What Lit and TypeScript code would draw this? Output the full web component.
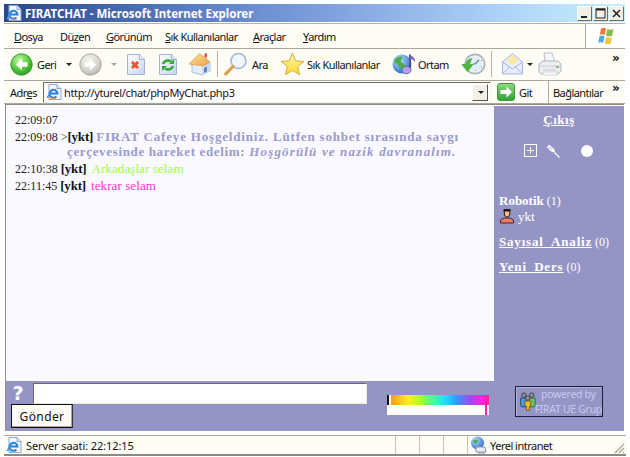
import { LitElement, html, css, svg } from "lit";
import { customElement } from "lit/decorators.js";

const defs = svg`
  <defs>
    <radialGradient id="gGreen" cx=".4" cy=".3" r=".8"><stop offset="0" stop-color="#c8f5a0"/><stop offset=".55" stop-color="#52c83c"/><stop offset="1" stop-color="#1f8f22"/></radialGradient>
    <radialGradient id="gGrey" cx=".4" cy=".3" r=".8"><stop offset="0" stop-color="#f4f4ee"/><stop offset=".6" stop-color="#d6d6cc"/><stop offset="1" stop-color="#a9a99f"/></radialGradient>
    <linearGradient id="gPage" x1="0" y1="0" x2="1" y2="1"><stop offset="0" stop-color="#ffffff"/><stop offset="1" stop-color="#c4d4f2"/></linearGradient>
    <linearGradient id="gStar" x1="0" y1="0" x2="0" y2="1"><stop offset="0" stop-color="#fffbb0"/><stop offset="1" stop-color="#fbd62c"/></linearGradient>
    <linearGradient id="gRoof" x1="0" y1="0" x2="1" y2="1"><stop offset="0" stop-color="#fde6a0"/><stop offset="1" stop-color="#eaa040"/></linearGradient>
    <radialGradient id="gGlobe" cx=".35" cy=".3" r=".8"><stop offset="0" stop-color="#b9e2fb"/><stop offset="1" stop-color="#1f63c6"/></radialGradient>
    <linearGradient id="gGo" x1="0" y1="0" x2="0" y2="1"><stop offset="0" stop-color="#8fdc7c"/><stop offset="1" stop-color="#2f9f35"/></linearGradient>
  </defs>`;

const ic = (w: number, h: number, body: unknown) =>
  html`<svg class="ic" width=${w} height=${h} viewBox="0 0 ${w} ${h}">${body}</svg>`;

const ieLogo = (s: number) => html`<svg class="ic" width=${s} height=${s} viewBox="0 0 16 16">
  <path d="M3 .5h8l4 4v11H3z" fill="#f4f7fd" stroke="#8ea6d0"/>
  <path d="M11 .5v4h4" fill="#dfe8f8" stroke="#8ea6d0"/>
  <path d="M4 9.500h7.500A4 4 0 1 0 10.500 12.500" fill="none" stroke="#2a7fd8" stroke-width="2"/>
  <path d="M.5 14C2 9 8 3.500 13 4.500 9 4 4 8 2.500 14z" fill="#3f9ae8"/>
  <path d="M4 14c2 1 5 1 7-.5" stroke="#e8a23a" stroke-width=".9" fill="none"/>
</svg>`;

const icons = {
  back: ic(23, 23, svg`<circle cx="11.5" cy="11.5" r="10.7" fill="url(#gGreen)" stroke="#3aa032"/>
    <path d="M12 5.500 6 11.500l6 6v-3.700h5.500V9.200H12z" fill="#fff"/>`),
  fwd: ic(23, 23, svg`<circle cx="11.5" cy="11.5" r="10.7" fill="url(#gGrey)" stroke="#aaaaa2"/>
    <path d="M11 5.500l6 6-6 6v-3.700H5.500V9.200H11z" fill="#fff"/>`),
  stop: ic(20, 23, svg`<path d="M1.500 1.500h12l5 5v15h-17z" fill="url(#gPage)" stroke="#9db3dc"/>
    <path d="M13.500 1.500v5h5" fill="#e6edfa" stroke="#9db3dc"/>
    <path d="M6 9l6 6M12 9l-6 6" stroke="#e8552a" stroke-width="3"/>`),
  refresh: ic(20, 23, svg`<path d="M1.500 1.500h12l5 5v15h-17z" fill="url(#gPage)" stroke="#9db3dc"/>
    <path d="M13.500 1.500v5h5" fill="#e6edfa" stroke="#9db3dc"/>
    <path d="M5 11a5 4.500 0 0 1 8-2.500" fill="none" stroke="#31a83a" stroke-width="2.400"/>
    <path d="M11 11h5V6z" fill="#31a83a"/>
    <path d="M15 13a5 4.500 0 0 1-8 2.500" fill="none" stroke="#31a83a" stroke-width="2.400"/>
    <path d="M9 13H4v5z" fill="#31a83a"/>`),
  home: ic(24, 24, svg`<path d="M4 12v8l10 3 8-4v-9L14 4z" fill="#e4eefb" stroke="#a8bcd6"/>
    <path d="M14 23v-9l8-4v9z" fill="#c9dcf3"/>
    <path d="M1 12 11.500 1.500 22 10l-7 4z" fill="url(#gRoof)" stroke="#d99a48" stroke-width=".7"/>
    <rect x="16.500" y="1.500" width="2.500" height="4" fill="#d8503a"/>
    <path d="M16 21v-5l3-1.500v5z" fill="#5c86bf"/>`),
  search: ic(24, 24, svg`<circle cx="14.500" cy="9" r="7.500" fill="#f2f7fd" stroke="#9fb7d8" stroke-width="1.600"/>
    <path d="M11 4.500a5 5 0 0 1 6-.5" stroke="#fff" fill="none"/>
    <path d="M9 14.500 1.800 21.800" stroke="#d9a04c" stroke-width="3.200" stroke-linecap="round"/>`),
  star: ic(25, 24, svg`<path d="M12.500 1l3.200 7.800 8.300.6-6.400 5.300 2 8.100-7.100-4.400-7.100 4.400 2-8.100L1 9.400l8.300-.6z" fill="url(#gStar)" stroke="#d9ae3a"/>`),
  media: ic(25, 24, svg`<circle cx="10" cy="12" r="9.500" fill="url(#gGlobe)"/>
    <path d="M3 7c3-2 5-3 7-2 1 2-2 3-1 5s4 1 4 4-3 3-5 2-1-3-3-4-3-2-2-5z" fill="#4fae4a"/>
    <path d="M18 2.500V17" stroke="#5b4aa0" stroke-width="2"/>
    <path d="M18 2.500c2 2 6 3 5 8-1-3-3-3-5-3.500z" fill="#7a68b8"/>
    <ellipse cx="14.500" cy="18" rx="4.500" ry="3.800" fill="#b3a4e0" stroke="#5b4aa0" stroke-width=".8"/>`),
  history: ic(25, 24, svg`<circle cx="14" cy="12" r="9.700" fill="#eef4f8" stroke="#a9b6bf" stroke-width="1.800"/>
    <circle cx="14" cy="12" r="7" fill="#dceef6"/>
    <path d="M14 12l4-4M14 12h-2" stroke="#6b7d8c" stroke-width="1.200"/>
    <path d="M20 8.500h1M20 15h1M15 18v1" stroke="#e06a4a"/>
    <path d="M1 12.500h4c0-3 2-5 5.500-6L9 11c-1 1-1 1.500-.5 1.500H12l-5.500 7z" fill="#52b93f" stroke="#34912c" stroke-width=".6"/>`),
  mail: ic(23, 24, svg`<path d="M1.500 10 11.500 1.500 21.500 10v12h-20z" fill="#e9eefc" stroke="#a8b4e6"/>
    <path d="M5 8l6.500-5 6.500 5-6.500 5z" fill="#fbe9a8"/>
    <path d="M1.500 10l10 7 10-7M1.500 22l7.500-8M21.500 22l-7.500-8" fill="none" stroke="#a8b4e6"/>`),
  printer: ic(24, 24, svg`<path d="M6 1h8l3 9H7z" fill="#f3f6fc" stroke="#b6c2d8"/>
    <path d="M1 12l4-3h15l3 3v7l-3 3H3l-2-2z" fill="#eceef0" stroke="#b0b6ba"/>
    <path d="M1 14h22M5 18h13" stroke="#c8ccd0"/><path d="M18 15h3" stroke="#5cb85a" stroke-width="1.500"/>
    <path d="M5 20h14v3H5z" fill="#fbfbfb" stroke="#c0c4c8" stroke-width=".6"/>`),
  go: ic(18, 18, svg`<rect x=".5" y=".5" width="17" height="17" rx="2.500" fill="url(#gGo)" stroke="#3d9a3f"/>
    <path d="M9.500 3.500 15 9l-5.500 5.500V11H3.500V7h6z" fill="#fff"/>`),
  win: ic(20, 18, svg`<path d="M5 1.500c2-1 3.500-1 5 0l-1.200 6.500c-1.500-1-3.200-1-5 0z" fill="#ec7a3a"/>
    <path d="M11.200 2c2 1 4 1 6.300 0l-1.300 6.800c-2.200 1-4 1-6.200 0z" fill="#7fbf4a"/>
    <path d="M3.500 9.300c1.800-1 3.500-1 5 0L7.200 16c-1.500-1-3.200-1-5 0z" fill="#52a6e8"/>
    <path d="M10 10c2.100 1 4 1 6 0l-1.300 6.500c-2 1-3.800 1-6 0z" fill="#f5c63a"/>`),
  net: ic(17, 18, svg`<circle cx="7.500" cy="7" r="6.500" fill="url(#gGlobe)"/><path d="M3 5c2-2 5-2 5 0s-3 3-4 2z" fill="#4fae4a"/>
    <path d="M6 11h9l1 5H6z" fill="#e8ecf4" stroke="#8a94b0"/><path d="M8 17h7" stroke="#8a94b0"/>`),
  user: ic(16, 16, svg`<path d="M1.500 15v-3l3.500-2h6l3.500 2v3z" fill="#f07a6a" stroke="#3a2a2a"/>
    <path d="M5 1.500h6v2l-.5 3.500-1.500 2H7L5.500 7z" fill="#f8c090" stroke="#201818"/>
    <path d="M4.800 1h6.400v2.500H4.800z" fill="#201818"/>`),
  group: html`<svg class="ic" width="16" height="19" viewBox="0 0 16 19">
    <circle cx="4" cy="3" r="2.300" fill="#8a94a8" stroke="#333" stroke-width=".8"/><circle cx="12" cy="3" r="2.300" fill="#8a94a8" stroke="#333" stroke-width=".8"/>
    <path d="M.5 6h6v7l-1 2h-4l-1-2z" fill="#3f9de0" stroke="#2a3a5a" stroke-width=".8"/>
    <path d="M9.500 6h6v7l-1 2h-4l-1-2z" fill="#5fc860" stroke="#2a5a3a" stroke-width=".8"/>
    <circle cx="8" cy="6" r="2.200" fill="#a89a7a" stroke="#333" stroke-width=".8"/>
    <path d="M5 9h6v4.500l-1.500 1v4h-3v-4L5 13.500z" fill="#f6b52e" stroke="#6a4a10" stroke-width=".8"/>
  </svg>`,
  pin: ic(14, 14, svg`<path d="M.8 3 3.200.8 7.800 4.300 9.300 8.800 4.800 7.300z" fill="#fff"/>
    <path d="M3 3.200l2.500 2.500M5.200 2.600l2 2" stroke="#9595c5" stroke-width=".9"/>
    <path d="M8.500 8.500l5 5" stroke="#fff" stroke-width="1.200"/>`),
};

const chev = html`<span class="chev">»</span>`;
const arrow = html`<span class="caret"></span>`;

@customElement("app-root")
export class AppRoot extends LitElement {
  static styles = css`
    :host { display: block; width: 630px; height: 457px; overflow: hidden; background: #fff; font-family: "Noto Sans", "DejaVu Sans", sans-serif; font-size: 11px; letter-spacing: -.55px; color: #111; }
    .defs { position: absolute; width: 0; height: 0; }
    .ic { display: block; }
    .win { height: 457px; display: flex; flex-direction: column; padding: 4px 5px 1px 4px; box-sizing: border-box; background: #fff; }
    .title { flex: 0 0 18px; display: flex; align-items: center; padding: 0 1px 0 2px; background: linear-gradient(90deg, #2a4789 0%, #5a7cc4 30%, #85a5e0 55%, #aed2f8 80%, #c9f1fb 100%); color: #fff; font: bold 11.500px "Noto Sans", "DejaVu Sans", sans-serif; letter-spacing: 0; }
    .title .t { margin-left: 3px; flex: 1; white-space: nowrap; }
    .wb { width: 15px; height: 15px; margin-left: 1px; box-sizing: border-box; background: #f1efe6; border: 1px solid; border-color: #fff #6f6c5e #6f6c5e #fff; display: flex; align-items: center; justify-content: center; }
    .bar { background: #fdfcf5; border-top: 1px solid #aca899; box-sizing: border-box; }
    .menu { flex: 0 0 25px; margin-top: 1px; display: flex; border-top: 1px solid #b5b2a5; }
    .menu-items { flex: 1; display: grid; grid-template-columns: 46px 46px 59px 88px 50px 1fr; padding-left: 10px; align-items: center; border-right: 1px solid #aca899; white-space: nowrap; }
    .logo { flex: 0 0 39px; display: flex; align-items: center; justify-content: center; background: #fff; }
    .tools { flex: 0 0 32px; display: grid; grid-template-columns: 27px 28px 14px 31px 16px 32px 30px 29px 7px 28px 28px 27px 85px 26px 43px 30px 10px 25px 12px 74px 1fr; padding: 0 0 1px 6px; align-items: center; white-space: nowrap; }
    .sep { width: 1px; height: 26px; background: #b5b2a5; }
    .caret { display: block; width: 0; height: 0; border: 3px solid transparent; border-top: 3px solid #222; border-bottom: 0; margin-left: 1px; }
    .caret.off { border-top-color: #aaa; }
    .chev { font: bold 12px "DejaVu Sans", sans-serif; line-height: 10px; align-self: start; margin-top: 4px; }
    .addr { flex: 0 0 24px; display: flex; align-items: center; padding-left: 6px; white-space: nowrap; border-bottom: 1px solid #aca899; }
    .addr .lbl { width: 33px; }
    .field { width: 448px; height: 21px; box-sizing: border-box; background: #fff; border: 1px solid; border-color: #6b6a60 #f2f1ea #f2f1ea #6b6a60; display: flex; align-items: center; padding-left: 2px; gap: 2px; }
    .field .url { flex: 1; letter-spacing: -.35px; }
    .dd { width: 16px; height: 17px; box-sizing: border-box; margin-right: 2px; background: #f1efe6; border: 1px solid; border-color: #fff #555 #555 #fff; display: flex; align-items: center; justify-content: center; }
    .gobtn { margin-left: 6px; width: 51px; display: flex; gap: 4px; align-items: center; border-right: 1px solid #aca899; height: 22px; }
    .links { margin-left: 4px; width: 59px; }
    .addr .chev { margin-top: 2px; }
    .page { flex: 1; min-height: 0; display: flex; flex-direction: column; margin: 0 1px; border-left: 1px solid #8c8c84; border-top: 1px solid #8c8c84; padding-top: 1px; letter-spacing: 0; }
    .top { flex: 1; min-height: 0; display: flex; }
    .chat { width: 488px; background: #f9f9ff; padding: 7px 0 0 9px; box-sizing: border-box; font: 12px/15px "Liberation Serif", serif; color: #222; }
    .row { padding-left: 52px; text-indent: -52px; margin-bottom: 2px; width: 440px; }
    .row b { font-size: 13px; line-height: 13px; letter-spacing: -.2px; color: #111; }
    .welcome { color: #9999cc; font-weight: bold; font-size: 13px; line-height: 13px; letter-spacing: .82px; }
    .welcome .l2 { letter-spacing: .65px; }
    .welcome i { letter-spacing: 1.15px; }
    .green, .pink { font-size: 13px; line-height: 13px; letter-spacing: .1px; margin-left: 2px; }
    .green { color: #99ff44; }
    .pink { color: #ff33cc; }
    .side { flex: 1; background: #9595c5; color: #fff; font: 12px/15px "Liberation Serif", serif; padding: 6px 0 0 5px; }
    .exit { display: block; text-align: center; font-weight: bold; font-size: 13px; letter-spacing: .5px; text-decoration: underline; padding-right: 5px; color: #fff; }
    .acts { display: grid; grid-template-columns: 22px 35px 12px; margin: 16px 0 0 25px; align-items: center; height: 15px; }
    .plus { width: 13px; height: 13px; }
    .dot { width: 12px; height: 12px; border-radius: 50%; background: #fff; }
    .roomname { font-weight: bold; font-size: 13px; }
    .room { margin-top: 10px; height: 15px; white-space: nowrap; }
    .room.first { margin-top: 35px; }
    .who { display: flex; align-items: center; gap: 3px; height: 16px; font-size: 13px; margin-bottom: 1px; }
    .room a { color: #fff; font-weight: bold; font-size: 13px; letter-spacing: .82px; text-decoration: underline; line-height: 15px; }
    .form { flex: 0 0 50px; background: #9595c5; display: grid; grid-template-columns: 27px 334px 20px 102px 26px 88px; grid-template-rows: 21px 1fr; padding: 2px 0 0 0; box-sizing: border-box; }
    .q { color: #fff; font: bold 19px/21px "DejaVu Sans", sans-serif; text-align: center; padding-right: 3px; }
    .input { background: #fff; border: 1px solid; border-color: #6b6a60 #ece9d8 #ece9d8 #6b6a60; box-sizing: border-box; }
    .send { grid-column: 1 / 3; margin: 0 0 0 5px; width: 62px; height: 24px; padding: 0; box-sizing: border-box; background: #fdfcf5; border: 1px solid #111; border-right-color: #333; box-shadow: inset -1px -1px 0 #aca899; font: 12px "Noto Sans", sans-serif; letter-spacing: .4px; color: #111; }
    .colors { grid-column: 4; grid-row: 1 / 3; display: flex; flex-direction: column; margin-top: 12px; }
    .cbar { height: 10px; display: flex; background: #fff; }
    .cbar .k { width: 2px; background: #111; }
    .cbar .w { width: 2px; background: #fff; }
    .cbar .g { flex: 1; background: linear-gradient(90deg, #ff9a22 0%, #ffee22 17%, #aaff22 30%, #33ffaa 45%, #22ddff 55%, #3399ff 67%, #aa44ee 82%, #ff22dd 93%, #ff2299 100%); }
    .cpick { height: 10px; background: #fff; display: flex; justify-content: flex-end; padding-right: 2px; }
    .cpick span { width: 2px; background: #ff22aa; }
    .pow { grid-column: 6; grid-row: 1 / 3; height: 31px; margin-top: 3px; box-sizing: border-box; border: 1px solid #1c1c3c; box-shadow: inset 1px 1px 0 #b0b0dc; display: flex; align-items: center; padding-left: 4px; color: #c8c8f0; font: 10.500px/15px "Noto Sans", sans-serif; letter-spacing: -.3px; background: #9595c5; }
    .pow .tx { text-align: center; white-space: nowrap; margin-left: -1px; }
    .status { flex: 0 0 21px; margin-top: 4px; display: grid; grid-template-columns: 389px 24px 24px 24px 1fr; border-top: 1px solid #aca899; border-bottom: 2px solid #8a8a80; margin-right: -1px; background: #fdfcf5; letter-spacing: -.1px; white-space: nowrap; box-sizing: border-box; }
    .cell { display: flex; align-items: center; gap: 4px; padding-left: 2px; box-sizing: border-box; }
    .cell.b { border-left: 1px solid #c8c5b6; margin-left: 2px; }
    .net { letter-spacing: -.5px; margin-left: -1px; }
    .grip { margin-left: auto; align-self: flex-end; margin-right: 1px; }
  `;

  render() {
    return html`<svg class="defs">${defs}</svg>
    <div class="win">
      <div class="title">
        ${ieLogo(16)}
        <span class="t">FIRATCHAT - Microsoft Internet Explorer</span>
        <span class="wb">${ic(11, 11, svg`<rect x="2" y="8" width="6" height="2" fill="#222"/>`)}</span>
        <span class="wb">${ic(11, 11, svg`<rect x="1" y="1" width="9" height="9" fill="none" stroke="#222"/><path d="M1 1.500h9" stroke="#222" stroke-width="2"/>`)}</span>
        <span class="wb">${ic(11, 11, svg`<path d="M2 2l7 7M9 2l-7 7" stroke="#222" stroke-width="1.500"/>`)}</span>
      </div>
      <div class="bar menu">
        <div class="menu-items">
          <span><u>D</u>osya</span><span>Dü<u>z</u>en</span><span><u>G</u>örünüm</span><span><u>S</u>ık Kullanılanlar</span><span><u>A</u>raçlar</span><span><u>Y</u>ardım</span>
        </div>
        <div class="logo">${icons.win}</div>
      </div>
      <div class="bar tools">
        ${icons.back}<span>Geri</span>${arrow}${icons.fwd}<span class="caret off"></span>
        ${icons.stop}${icons.refresh}${icons.home}<span class="sep"></span>
        ${icons.search}<span>Ara</span>${icons.star}<span>Sık Kullanılanlar</span>
        ${icons.media}<span>Ortam</span>${icons.history}<span class="sep"></span>
        ${icons.mail}${arrow}${icons.printer}${chev}
      </div>
      <div class="bar addr">
        <span class="lbl">Adr<u>e</u>s</span>
        <div class="field">${ieLogo(16)}<span class="url">http://yturel/chat/phpMyChat.php3</span><span class="dd">${arrow}</span></div>
        <div class="gobtn">${icons.go}<span>Git</span></div>
        <span class="links">Bağlantılar</span>${chev}
      </div>
      <div class="page">
        <div class="top">
          <div class="chat">
            <div class="row">22:09:07</div>
            <div class="row">22:09:08 &gt;<b>[ykt]</b> <span class="welcome">FIRAT Cafeye Hoşgeldiniz. Lütfen sohbet sırasında saygı <span class="l2">çerçevesinde hareket edelim:</span> <i>Hoşgörülü ve nazik davranalım.</i></span></div>
            <div class="row">22:10:38 <b>[ykt]</b> <span class="green">Arkadaşlar selam</span></div>
            <div class="row">22:11:45 <b>[ykt]</b> <span class="pink">tekrar selam</span></div>
          </div>
          <div class="side">
            <a class="exit">Çıkış</a>
            <div class="acts">
              <span class="plus">${ic(13, 13, svg`<rect x=".5" y=".5" width="12" height="12" fill="none" stroke="#fff"/><path d="M6.500 3v7M3 6.500h7" stroke="#fff"/>`)}</span>
              ${icons.pin}
              <span class="dot"></span>
            </div>
            <div class="room first"><span class="roomname">Robotik</span> (1)</div>
            <div class="who">${icons.user}<span>ykt</span></div>
            <div class="room"><a>Sayısal_Analiz</a> (0)</div>
            <div class="room"><a>Yeni_Ders</a> (0)</div>
          </div>
        </div>
        <div class="form">
          <div class="q">?</div>
          <div class="input"></div>
          <button class="send">Gönder</button>
          <div class="colors">
            <div class="cbar"><span class="k"></span><span class="w"></span><span class="g"></span></div>
            <div class="cpick"><span></span></div>
          </div>
          <div class="pow">${icons.group}<div class="tx">powered by<br />FIRAT UE Grup</div></div>
        </div>
      </div>
      <div class="status">
        <div class="cell">${ieLogo(16)}<span>Server saati: 22:12:15</span></div>
        <div class="cell b"></div><div class="cell b"></div><div class="cell b"></div>
        <div class="cell b">${icons.net}<span class="net">Yerel intranet</span>
          <span class="grip">${ic(12, 12, svg`<path d="M11 2 2 11M11 6l-5 5M11 10l-1 1" stroke="#aca899" stroke-width="1.400"/>`)}</span>
        </div>
      </div>
    </div>`;
  }
}
